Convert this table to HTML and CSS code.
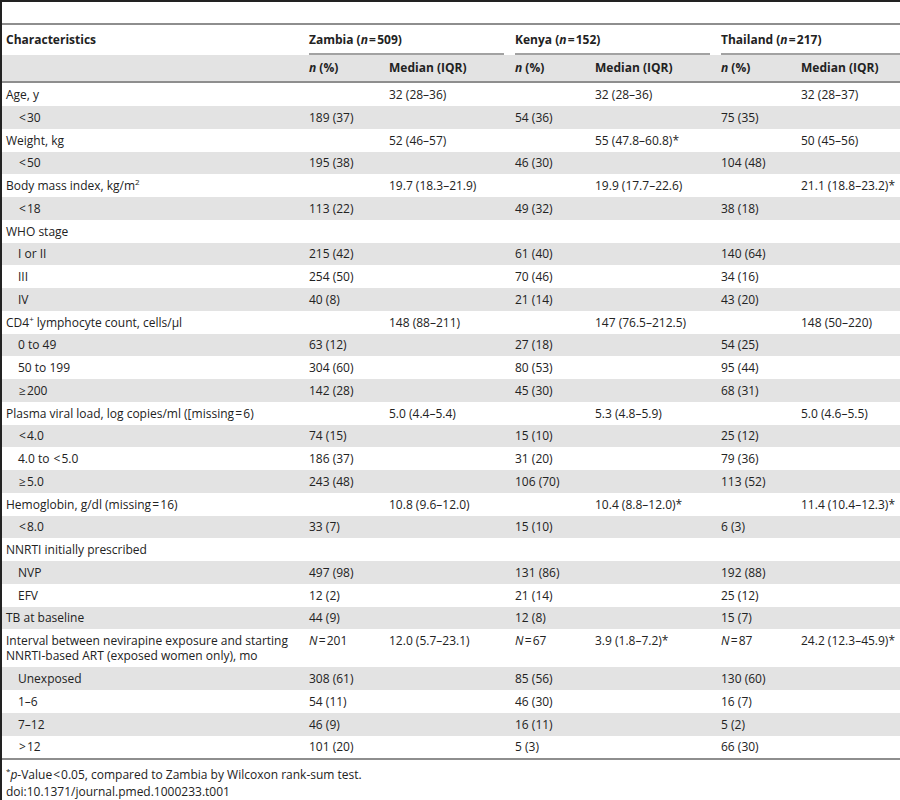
FILE: index.html
```html
<!DOCTYPE html>
<html lang="en">
<head>
  <meta charset="UTF-8" />
  <meta name="viewport" content="width=device-width, initial-scale=1.0"/>
  <title>Table 1. Baseline characteristics</title>
  <link rel="stylesheet" href="styles.css">
</head>
<body>
  <div class="frame">
    <table class="data">
      <colgroup>
        <col class="c-label">
        <col class="c-n">
        <col class="c-med">
        <col class="c-n">
        <col class="c-med">
        <col class="c-n">
        <col class="c-last">
      </colgroup>
      <thead>
        <tr class="groups">
          <th class="first">Characteristics</th>
          <th colspan="2" class="group"><div class="group-label">Zambia (<i>n</i>&#8202;=&#8202;509)</div></th>
          <th colspan="2" class="group"><div class="group-label">Kenya (<i>n</i>&#8202;=&#8202;152)</div></th>
          <th colspan="2" class="group last"><div class="group-label">Thailand (<i>n</i>&#8202;=&#8202;217)</div></th>
        </tr>
        <tr class="sub">
          <th></th>
          <th><i>n</i> (%)</th>
          <th>Median (IQR)</th>
          <th><i>n</i> (%)</th>
          <th>Median (IQR)</th>
          <th><i>n</i> (%)</th>
          <th>Median (IQR)</th>
        </tr>
      </thead>
      <tbody>
        <tr><td>Age, y</td><td></td><td>32 (28–36)</td><td></td><td>32 (28–36)</td><td></td><td>32 (28–37)</td></tr>
        <tr><td class="indent"><span class="lt">&lt;</span>30</td><td>189 (37)</td><td></td><td>54 (36)</td><td></td><td>75 (35)</td><td></td></tr>
        <tr><td>Weight, kg</td><td></td><td>52 (46–57)</td><td></td><td>55 (47.8–60.8)*</td><td></td><td>50 (45–56)</td></tr>
        <tr><td class="indent"><span class="lt">&lt;</span>50</td><td>195 (38)</td><td></td><td>46 (30)</td><td></td><td>104 (48)</td><td></td></tr>
        <tr><td>Body mass index, kg/m<sup>2</sup></td><td></td><td>19.7 (18.3–21.9)</td><td></td><td>19.9 (17.7–22.6)</td><td></td><td>21.1 (18.8–23.2)*</td></tr>
        <tr><td class="indent"><span class="lt">&lt;</span>18</td><td>113 (22)</td><td></td><td>49 (32)</td><td></td><td>38 (18)</td><td></td></tr>
        <tr><td>WHO stage</td><td></td><td></td><td></td><td></td><td></td><td></td></tr>
        <tr><td class="indent">I or II</td><td>215 (42)</td><td></td><td>61 (40)</td><td></td><td>140 (64)</td><td></td></tr>
        <tr><td class="indent">III</td><td>254 (50)</td><td></td><td>70 (46)</td><td></td><td>34 (16)</td><td></td></tr>
        <tr><td class="indent">IV</td><td>40 (8)</td><td></td><td>21 (14)</td><td></td><td>43 (20)</td><td></td></tr>
        <tr><td>CD4<sup>+</sup> lymphocyte count, cells/µl</td><td></td><td>148 (88–211)</td><td></td><td>147 (76.5–212.5)</td><td></td><td>148 (50–220)</td></tr>
        <tr><td class="indent">0 to 49</td><td>63 (12)</td><td></td><td>27 (18)</td><td></td><td>54 (25)</td><td></td></tr>
        <tr><td class="indent">50 to 199</td><td>304 (60)</td><td></td><td>80 (53)</td><td></td><td>95 (44)</td><td></td></tr>
        <tr><td class="indent"><span class="lt">≥</span>200</td><td>142 (28)</td><td></td><td>45 (30)</td><td></td><td>68 (31)</td><td></td></tr>
        <tr><td>Plasma viral load, log copies/ml ([missing&#8202;=&#8202;6)</td><td></td><td>5.0 (4.4–5.4)</td><td></td><td>5.3 (4.8–5.9)</td><td></td><td>5.0 (4.6–5.5)</td></tr>
        <tr><td class="indent"><span class="lt">&lt;</span>4.0</td><td>74 (15)</td><td></td><td>15 (10)</td><td></td><td>25 (12)</td><td></td></tr>
        <tr><td class="indent">4.0 to <span class="lt">&lt;</span>5.0</td><td>186 (37)</td><td></td><td>31 (20)</td><td></td><td>79 (36)</td><td></td></tr>
        <tr><td class="indent"><span class="lt">≥</span>5.0</td><td>243 (48)</td><td></td><td>106 (70)</td><td></td><td>113 (52)</td><td></td></tr>
        <tr><td>Hemoglobin, g/dl (missing&#8202;=&#8202;16)</td><td></td><td>10.8 (9.6–12.0)</td><td></td><td>10.4 (8.8–12.0)*</td><td></td><td>11.4 (10.4–12.3)*</td></tr>
        <tr><td class="indent"><span class="lt">&lt;</span>8.0</td><td>33 (7)</td><td></td><td>15 (10)</td><td></td><td>6 (3)</td><td></td></tr>
        <tr><td>NNRTI initially prescribed</td><td></td><td></td><td></td><td></td><td></td><td></td></tr>
        <tr><td class="indent">NVP</td><td>497 (98)</td><td></td><td>131 (86)</td><td></td><td>192 (88)</td><td></td></tr>
        <tr><td class="indent">EFV</td><td>12 (2)</td><td></td><td>21 (14)</td><td></td><td>25 (12)</td><td></td></tr>
        <tr><td>TB at baseline</td><td>44 (9)</td><td></td><td>12 (8)</td><td></td><td>15 (7)</td><td></td></tr>
        <tr><td>Interval between nevirapine exposure and starting NNRTI-based ART (exposed women only), mo</td><td><i>N</i>&#8202;=&#8202;201</td><td>12.0 (5.7–23.1)</td><td><i>N</i>&#8202;=&#8202;67</td><td>3.9 (1.8–7.2)*</td><td><i>N</i>&#8202;=&#8202;87</td><td>24.2 (12.3–45.9)*</td></tr>
        <tr><td class="indent">Unexposed</td><td>308 (61)</td><td></td><td>85 (56)</td><td></td><td>130 (60)</td><td></td></tr>
        <tr><td class="indent">1–6</td><td>54 (11)</td><td></td><td>46 (30)</td><td></td><td>16 (7)</td><td></td></tr>
        <tr><td class="indent">7–12</td><td>46 (9)</td><td></td><td>16 (11)</td><td></td><td>5 (2)</td><td></td></tr>
        <tr><td class="indent"><span class="lt">&gt;</span>12</td><td>101 (20)</td><td></td><td>5 (3)</td><td></td><td>66 (30)</td><td></td></tr>
      </tbody>
    </table>

    <div class="notes">
      <p><sup>*</sup><i>p</i>-Value<span class="lt">&lt;</span>0.05, compared to Zambia by Wilcoxon rank-sum test.</p>
      <p>doi:10.1371/journal.pmed.1000233.t001</p>
    </div>
  </div>
</body>
</html>
```

FILE: styles.css
```css
body {
  margin: 0;
  font-family: "Open Sans", "DejaVu Sans", sans-serif;
  font-size: 12px;
  color: #222;
  background: #fff;
}

.frame {
  border-top: 2px solid #222;
  border-left: 2px solid #222;
  min-height: 798px;
  box-sizing: border-box;
}

.data {
  width: 898px;
  margin-top: 21px;
  table-layout: fixed;
  border-collapse: separate;
  border-spacing: 0;
  border-top: 2px solid #8e8e8e;
  border-bottom: 2px solid #8e8e8e;
}

.c-label { width: 303px; }
.c-n { width: 80px; }
.c-med { width: 126px; }
.c-last { width: auto; }

th,
td {
  text-align: left;
  vertical-align: top;
  line-height: 15.25px;
}

th {
  font-weight: bold;
}

.groups th.first {
  padding: 7px 4px 8px;
}

.groups th.group {
  padding: 0 7px 0 4px;
}

.groups th.group.last {
  padding-right: 0;
}

.group-label {
  padding: 7px 0 6px;
  border-bottom: 2px solid #a2a2a2;
  line-height: 15px;
}

.sub th {
  background: #e3e3e3;
  padding: 4.5px 4px 6.5px;
  line-height: 15px;
  border-bottom: 2px solid #8e8e8e;
}

td {
  padding: 3.75px 4px;
}

td.indent {
  padding-left: 16px;
}

tbody tr:nth-child(even) td {
  background: #e3e3e3;
}

/* math relation signs sit a little wider in the source */
.lt {
  padding: 0 1px;
}

sup {
  font-size: 8px;
  line-height: 0;
  vertical-align: 5px;
}

.notes {
  margin-top: 7px;
  padding-left: 4px;
}

.notes p {
  margin: 0;
  line-height: 16.5px;
}
```
